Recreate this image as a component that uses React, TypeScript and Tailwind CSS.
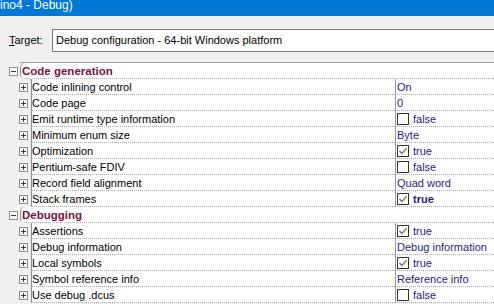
type Item = { name: string; value: string; kind?: 'text' | 'check'; checked?: boolean; bold?: boolean };
type Category = { title: string; items: Item[] };

const categories: Category[] = [
  {
    title: 'Code generation',
    items: [
      { name: 'Code inlining control', value: 'On' },
      { name: 'Code page', value: '0' },
      { name: 'Emit runtime type information', value: 'false', kind: 'check', checked: false },
      { name: 'Minimum enum size', value: 'Byte' },
      { name: 'Optimization', value: 'true', kind: 'check', checked: true },
      { name: 'Pentium-safe FDIV', value: 'false', kind: 'check', checked: false },
      { name: 'Record field alignment', value: 'Quad word' },
      { name: 'Stack frames', value: 'true', kind: 'check', checked: true, bold: true },
    ],
  },
  {
    title: 'Debugging',
    items: [
      { name: 'Assertions', value: 'true', kind: 'check', checked: true },
      { name: 'Debug information', value: 'Debug information' },
      { name: 'Local symbols', value: 'true', kind: 'check', checked: true },
      { name: 'Symbol reference info', value: 'Reference info' },
      { name: 'Use debug .dcus', value: 'false', kind: 'check', checked: false },
    ],
  },
];

function ExpandBox({ open }: { open: boolean }) {
  return (
    <svg width="9" height="9" viewBox="0 0 9 9" className="block">
      <rect x="0.5" y="0.5" width="8" height="8" fill="#fff" stroke="#8e8e8e" />
      <line x1="2" y1="4.5" x2="7" y2="4.5" stroke="#3c3c3c" />
      {!open && <line x1="4.5" y1="2" x2="4.5" y2="7" stroke="#3c3c3c" />}
    </svg>
  );
}

function CheckBox({ checked }: { checked: boolean }) {
  return (
    <svg width="12" height="12" viewBox="0 0 12 12" className="block shrink-0">
      <rect x="0.5" y="0.5" width="11" height="11" fill="#fff" stroke="#333" />
      {checked && <polyline points="2.5,6 5,8.6 9.6,3.2" fill="none" stroke="#6a6a6a" strokeWidth="1.3" />}
    </svg>
  );
}

const dotted = 'border-b border-b-[#a8a8a8] [border-bottom-style:dotted]';

function Row({ item }: { item: Item }) {
  return (
    <div className="flex h-[16px]">
      <div className="w-[31px] shrink-0">
        <div className="ml-[19px] mt-[4px]">
          <ExpandBox open={false} />
        </div>
      </div>
      <div className={`w-[364px] shrink-0 bg-white border-l border-l-[#8a8a8a] ${dotted} leading-[16px] text-black whitespace-nowrap`}>
        {item.name}
      </div>
      <div className={`flex-1 bg-white border-l border-l-[#9a9a9a] ${dotted} pl-[1px] leading-[16px] text-[#1e1e84] whitespace-nowrap`}>
        {item.kind === 'check' ? (
          <div className="flex items-start">
            <div className="mt-[2px]">
              <CheckBox checked={!!item.checked} />
            </div>
            <span className={`ml-[4px] ${item.bold ? 'font-bold' : ''}`}>{item.value}</span>
          </div>
        ) : (
          item.value
        )}
      </div>
    </div>
  );
}

export default function App() {
  return (
    <div className="w-[494px] h-[304px] overflow-hidden bg-[#f0f0f0] font-['Liberation_Sans',Arial,sans-serif]">
      <div className="h-[16px] bg-[#0078d7] text-white text-[12px] leading-[11px] overflow-hidden whitespace-nowrap">
        ino4 - Debug)
      </div>

      <div className="flex items-start h-[46px] pt-[13px] text-[11px] text-black">
        <span className="ml-[9px] w-[43px] pt-[4px] leading-[14px]">
          <span className="underline">T</span>arget:
        </span>
        <div className="flex-1 h-[23px] bg-white border border-r-0 border-[#7a7a7a] pl-[3px] pt-[3px] leading-[14px] whitespace-nowrap">
          Debug configuration - 64-bit Windows platform
        </div>
      </div>

      <div className="ml-[20px] h-px bg-[#a0a0a0]" />

      <div className="text-[11px]">
        {categories.map((cat) => (
          <div key={cat.title}>
            <div className="flex h-[16px]">
              <div className="w-[20px] shrink-0">
                <div className="ml-[9px] mt-[4px]">
                  <ExpandBox open={true} />
                </div>
              </div>
              <div className={`flex-1 bg-white border-l border-l-[#8a8a8a] rounded-l-[5px] ${dotted} pl-[1px] leading-[16px] text-[11.5px] font-bold text-[#7b1042] whitespace-nowrap`}>
                {cat.title}
              </div>
            </div>
            {cat.items.map((it) => (
              <Row key={it.name} item={it} />
            ))}
          </div>
        ))}
      </div>
    </div>
  );
}
